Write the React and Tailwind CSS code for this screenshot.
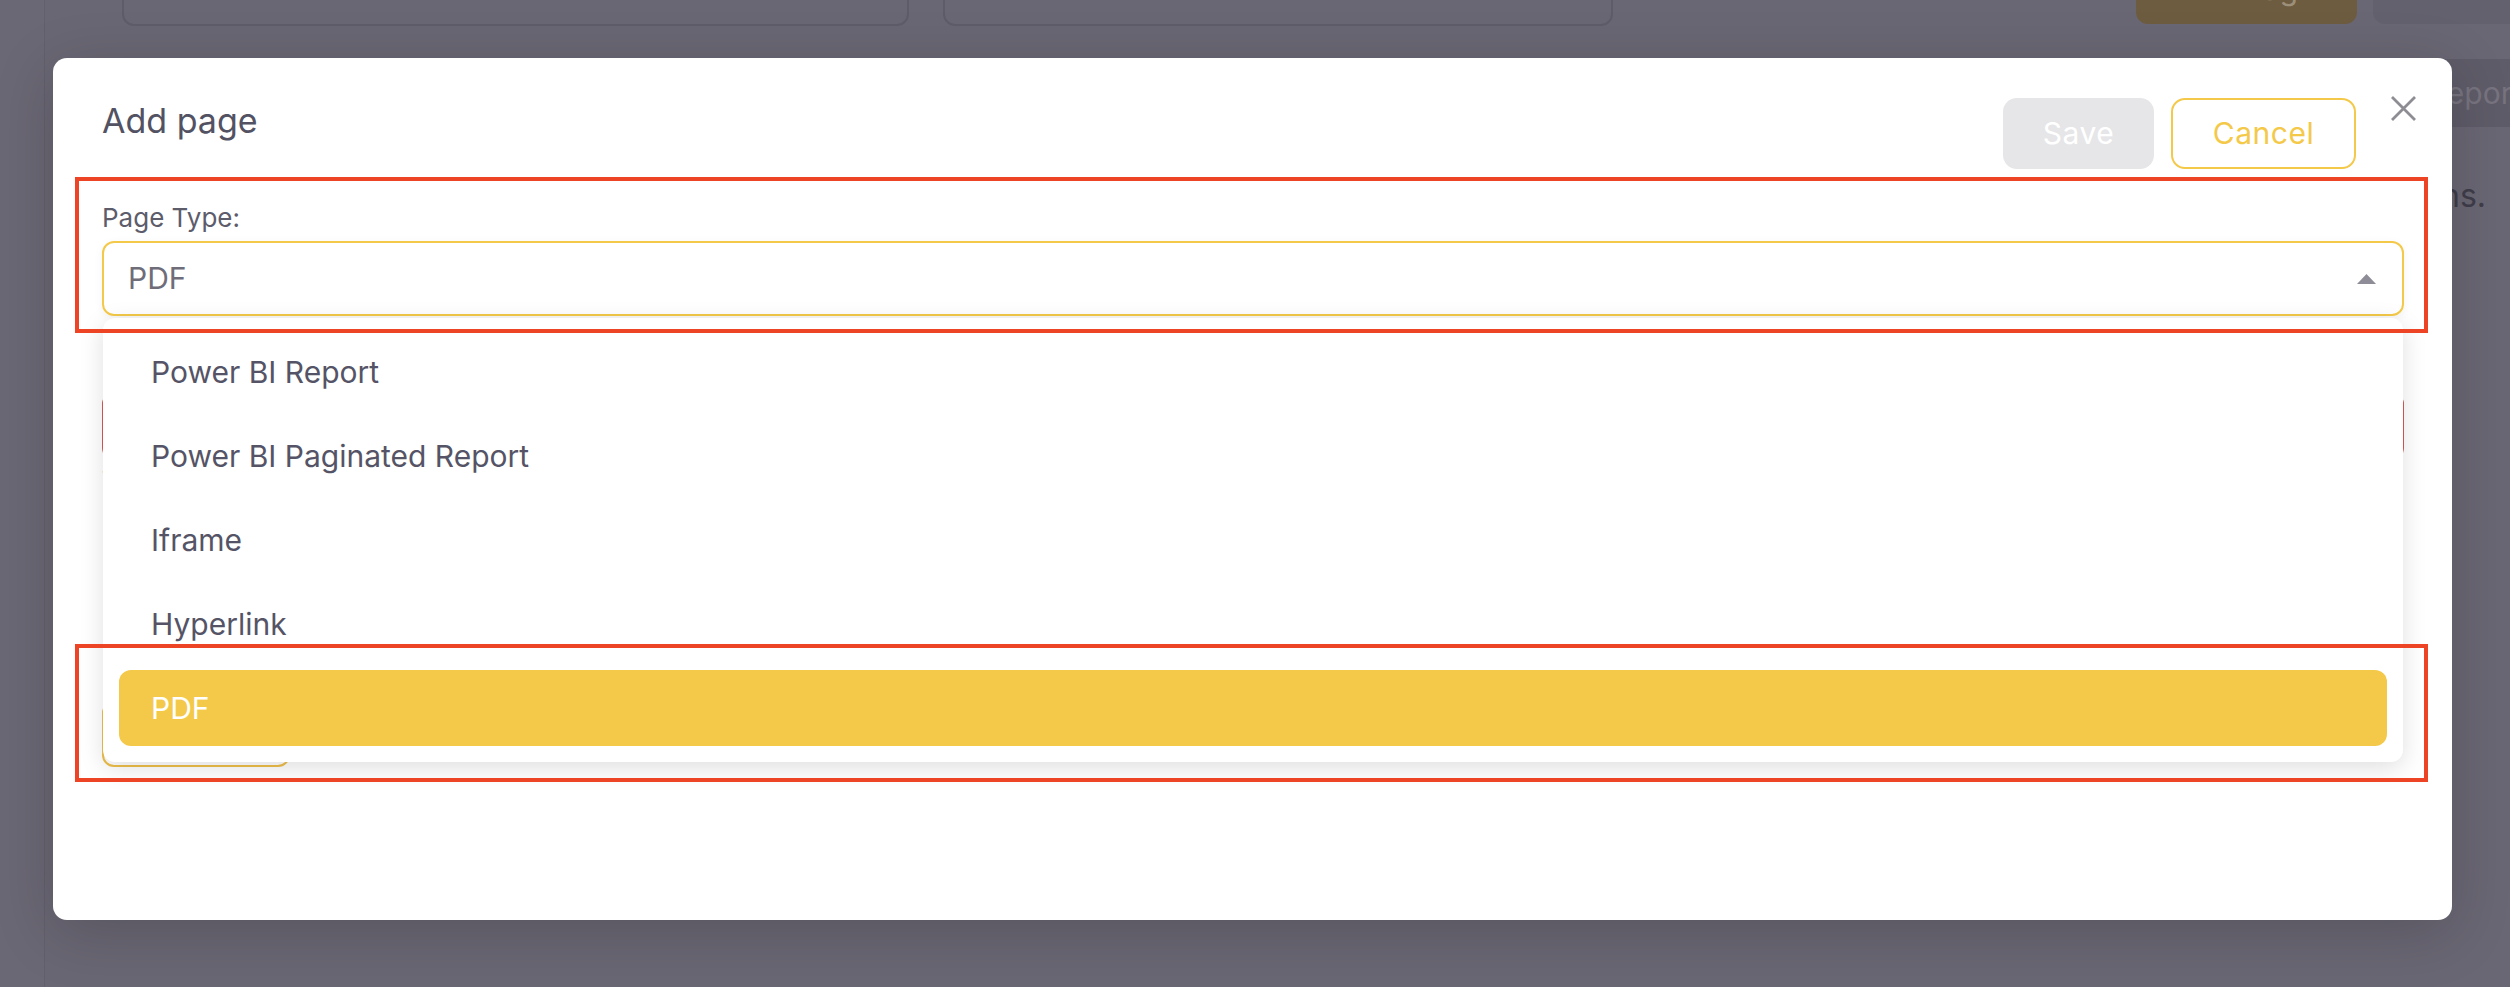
import { useState } from 'react';

const pageTypes = ['Power BI Report', 'Power BI Paginated Report', 'Iframe', 'Hyperlink', 'PDF'];

function CloseIcon() {
  return (
    <svg width="25" height="25" viewBox="0 0 25 25" className="text-[#8e8d94]">
      <path d="M1 1L24 24M24 1L1 24" stroke="currentColor" strokeWidth="2.8" fill="none" />
    </svg>
  );
}

function Caret() {
  return (
    <svg width="19" height="10" viewBox="0 0 19 10">
      <path d="M0 10L9.5 0L19 10Z" fill="#8e8c96" />
    </svg>
  );
}

export default function App() {
  const [pageType, setPageType] = useState('PDF');
  const [open, setOpen] = useState(true);

  return (
    <div className="relative flex h-[987px] w-full overflow-hidden bg-[#6a6774] font-['Inter',sans-serif]">
      {/* sidebar behind the overlay */}
      <div className="w-[45px] shrink-0 border-r border-[#63606d] bg-[#6b6875]" />

      {/* page behind the overlay */}
      <div className="flex min-w-0 flex-1 flex-col">
        <div className="-mt-[54px] flex h-[80px] items-end">
          <div className="ml-[77px] h-[80px] w-[787px] shrink-0 rounded-xl border-2 border-[#5f5c69]" />
          <div className="ml-[34px] h-[80px] w-[670px] shrink-0 rounded-xl border-2 border-[#5f5c69]" />
          <div className="mb-[2px] ml-[523px] flex h-[70px] w-[221px] shrink-0 items-center justify-center rounded-xl bg-[#6e5c40] text-[30px] text-[#9d907a]">
            Add Page
          </div>
          <div className="mb-[2px] ml-[16px] flex h-[70px] w-[180px] shrink-0 items-center justify-center rounded-xl bg-[#64616e] text-[30px] text-[#77737f]">
            Delete
          </div>
        </div>
        <div className="mt-[33px] flex justify-end">
          <div className="flex h-[68px] w-[700px] items-center whitespace-nowrap bg-[#5f5c69] pl-[618px] text-[30px] text-[#77737f]">
            Reports
          </div>
        </div>
        <p className="mt-[49px] pr-[24px] text-right text-[32px] leading-[40px] whitespace-nowrap text-[#3f3d4a]">
          Add pages to this workspace and organise them into sections.
        </p>
      </div>

      {/* modal */}
      <div className="absolute left-[53px] top-[58px] h-[862px] w-[2399px] rounded-[14px] bg-white pl-[49px] pr-[48px] pt-[40px] shadow-[0_12px_60px_rgba(0,0,0,0.18)]">
        <div className="flex items-start">
          <h2 className="mt-[2px] text-[34px] leading-[41px] text-[#525263]">Add page</h2>
          <div className="ml-auto flex gap-[17px]">
            <button className="h-[71px] w-[151px] rounded-[14px] bg-[#e6e6e8] text-[30px] tracking-[0.5px] text-white">
              Save
            </button>
            <button className="h-[71px] w-[185px] rounded-[14px] border-2 border-[#f4c94a] text-[30px] tracking-[0.5px] text-[#f4c94a]">
              Cancel
            </button>
          </div>
          <button className="-mr-[12px] -mt-[2px] ml-[35px]">
            <CloseIcon />
          </button>
        </div>

        <label className="mt-[33px] block text-[26px] leading-[32px] text-[#5d5c6b]">Page Type:</label>
        <div className="relative mt-[7px]">
          <div
            onClick={() => setOpen(!open)}
            className="flex h-[75px] cursor-pointer items-center justify-between rounded-xl border-2 border-[#f4c94a] pl-[24px] pr-[26px] text-[30px] text-[#6e6d79] shadow-[0_2px_10px_rgba(0,0,0,0.05)]"
          >
            <span>{pageType}</span>
            <Caret />
          </div>
          {open && (
            <ul className="absolute left-px right-px top-full z-10 mt-[2px] rounded-xl bg-white py-3 shadow-[0_6px_24px_rgba(0,0,0,0.13)]">
              {pageTypes.map(t => (
                <li key={t} className="px-4 py-1">
                  <div
                    onClick={() => setPageType(t)}
                    className={
                      t === pageType
                        ? 'flex h-[76px] cursor-pointer items-center rounded-xl bg-[#f4c94a] px-[32px] text-[30px] text-white'
                        : 'flex h-[76px] cursor-pointer items-center rounded-xl px-[32px] text-[30px] text-[#555466]'
                    }
                  >
                    {t}
                  </div>
                </li>
              ))}
            </ul>
          )}
        </div>

        <label className="mt-[33px] block text-[26px] leading-[32px] text-[#5d5c6b]">URL:</label>
        <div className="mt-[11px] h-[68px] rounded-xl border-2 border-[#d65a54]" />
        <p className="mt-[6px] text-[22px] leading-[27px] text-[#d65a54]">This field is required.</p>
        <button className="mt-[208px] h-[66px] w-[188px] rounded-xl border-2 border-[#eebf4a] text-[28px] text-[#f4c94a]">
          Upload
        </button>
      </div>

      {/* annotation outlines */}
      <div className="pointer-events-none absolute left-[75px] top-[177px] z-20 h-[156px] w-[2353px] border-4 border-[#ee4426]" />
      <div className="pointer-events-none absolute left-[75px] top-[644px] z-20 h-[138px] w-[2353px] border-4 border-[#ee4426]" />
    </div>
  );
}
